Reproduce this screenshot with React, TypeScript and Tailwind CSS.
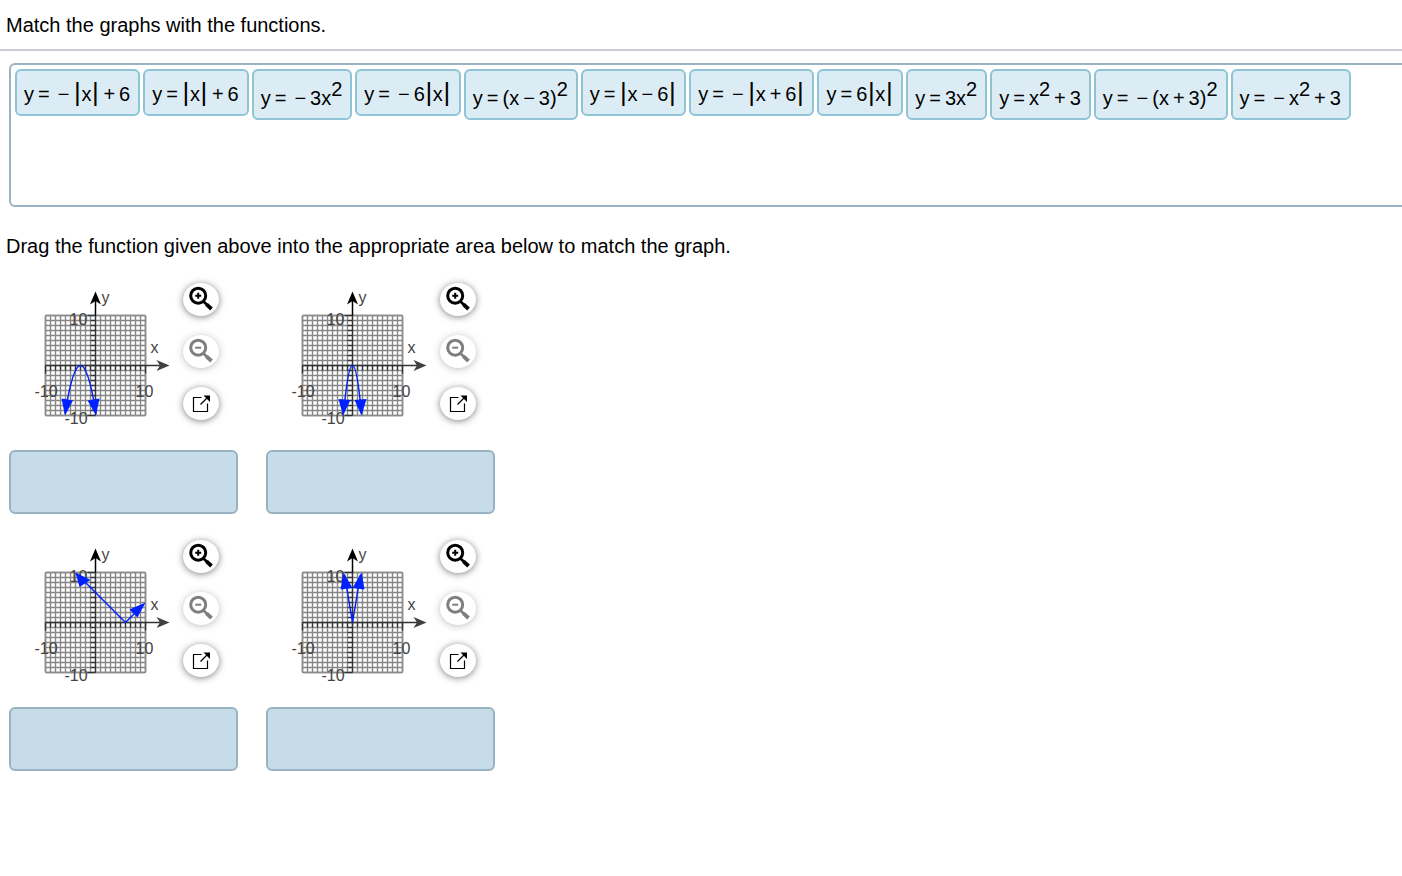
import { useState } from "react";
import type { DragEvent, ReactNode } from "react";
import clsx from "clsx";

// "|" is an absolute value bar, "^2" a raised exponent, "=", "+" and "−" are operators
const FUNCTIONS: string[][] = [
  ["y", "=", "−", "|", "x", "|", "+", "6"],
  ["y", "=", "|", "x", "|", "+", "6"],
  ["y", "=", "−", "3x", "^2"],
  ["y", "=", "−", "6", "|", "x", "|"],
  ["y", "=", "(x", "−", "3)", "^2"],
  ["y", "=", "|", "x", "−", "6", "|"],
  ["y", "=", "−", "|", "x", "+", "6", "|"],
  ["y", "=", "6", "|", "x", "|"],
  ["y", "=", "3x", "^2"],
  ["y", "=", "x", "^2", "+", "3"],
  ["y", "=", "−", "(x", "+", "3)", "^2"],
  ["y", "=", "−", "x", "^2", "+", "3"],
];

interface GraphData {
  name: string;
  curve: string;
  arrows: string[];
}

// Coordinates are relative to the origin, 5 units per grid square
const GRAPHS: GraphData[] = [
  {
    name: "Graph 1",
    curve: "M-30.5 48 Q-15 -48 0.5 48",
    arrows: ["-34,33 -22.5,35 -30.5,50", "-8,35 4,33 0.5,50"],
  },
  {
    name: "Graph 2",
    curve: "M-9 48 Q0 -48 9 48",
    arrows: ["-14,33.5 -2,34.5 -9.5,50", "2,34.5 14,33.5 9,50"],
  },
  {
    name: "Graph 3",
    curve: "M-19 -49 L30 0 L48 -18",
    arrows: ["-20,-50 -16,-35.5 -5,-42.5", "50,-20 34,-13 42,-5"],
  },
  {
    name: "Graph 4",
    curve: "M-8 -48 L0 0 L8 -48",
    arrows: ["-9,-50 -12,-33 0,-34.5", "9,-50 0,-34.5 12,-33"],
  },
];

const TICKS = Array.from({ length: 21 }, (_, i) => (i - 10) * 5);

const Formula = ({ tokens }: { tokens: string[] }) => (
  <>
    {tokens.map((token, i) => {
      if (token === "|") {
        return (
          <span key={i} className="w-2 text-center text-[26px] leading-6">
            |
          </span>
        );
      }
      if (token === "^2") {
        return (
          <sup key={i} className="-top-[9px] text-xl leading-6">
            2
          </sup>
        );
      }
      if (token === "=" || token === "+" || token === "−") {
        return (
          <span key={i} className="mx-1">
            {token}
          </span>
        );
      }
      return <span key={i}>{token}</span>;
    })}
  </>
);

const FunctionChip = ({ index }: { index: number }) => {
  const tokens = FUNCTIONS[index];
  return (
    <button
      type="button"
      draggable
      onDragStart={(e) => e.dataTransfer.setData("text/plain", String(index))}
      className={clsx(
        "flex cursor-move items-baseline rounded-md border-2 border-[#8fc3d6] bg-[#dcecf5] pl-[7px] pr-2 text-xl leading-6",
        tokens.includes("^2") ? "pt-[15px] pb-2" : "pt-[9px] pb-2"
      )}
    >
      <Formula tokens={tokens} />
    </button>
  );
};

const Graph = ({ graph }: { graph: GraphData }) => (
  <svg width="170" height="150" viewBox="-86.5 -83.5 170 150" role="img" aria-label={graph.name}>
    {/* Grid */}
    <g stroke="#868686" strokeWidth="1.4">
      {TICKS.map((t) => (
        <g key={t}>
          <line x1={t} y1={-50} x2={t} y2={50} />
          <line x1={-50} y1={t} x2={50} y2={t} />
        </g>
      ))}
    </g>
    <rect x="-50" y="-50" width="100" height="100" rx="1" fill="none" stroke="#8c8c8c" strokeWidth="1.6" />

    {/* Axes and tick marks */}
    <g stroke="#333333" strokeWidth="1.3">
      {TICKS.map((t) => (
        <g key={t}>
          <line x1={t} y1="0" x2={t} y2={Math.abs(t) === 50 ? 8 : 5} />
          <line x1={Math.abs(t) === 50 ? -8 : -5} y1={t} x2="0" y2={t} />
        </g>
      ))}
      <line x1="-50" y1="0" x2="66" y2="0" />
      <line x1="0" y1="-50" x2="0" y2="50" />
    </g>
    <line x1="0" y1="-50" x2="0" y2="-66" stroke="#000" strokeWidth="1.5" />
    <polygon points="0,-74 5.5,-61 0,-64.5 -5.5,-61" fill="#000" />
    <polygon points="74,0 61,5.5 64.5,0 61,-5.5" fill="#404040" />

    {/* Labels */}
    <g fill="#444444" fontSize="16">
      <text x="6" y="-63">y</text>
      <text x="55" y="-13">x</text>
      <text x="-26" y="-41">10</text>
      <text x="-31" y="58">-10</text>
      <text x="-61" y="31">-10</text>
      <text x="40" y="31">10</text>
    </g>

    {/* Function */}
    <path d={graph.curve} fill="none" stroke="#0021ff" strokeWidth="1.5" />
    {graph.arrows.map((points) => (
      <polygon key={points} points={points} fill="#0021ff" />
    ))}
  </svg>
);

interface ToolButtonProps {
  label: string;
  disabled?: boolean;
  children: ReactNode;
}

const ToolButton = ({ label, disabled, children }: ToolButtonProps) => (
  <button
    type="button"
    aria-label={label}
    disabled={disabled}
    className="rounded-[50%] bg-white shadow-[0_1px_7px_rgba(0,0,0,0.5)] disabled:opacity-50"
  >
    <svg width="36" height="33" viewBox="0 0 36 33" fill="none" stroke="#000">
      {children}
    </svg>
  </button>
);

const GraphTools = () => (
  <div className="flex flex-col gap-[19px] pt-px">
    <ToolButton label="Zoom in">
      <circle cx="15.2" cy="12.7" r="7.5" strokeWidth="3" />
      <path d="M12.2 12.7h6M15.2 9.7v6" strokeWidth="2" />
      <path d="M20.5 18.5l4 3.8" strokeWidth="2.6" />
      <path d="M23.5 21.3l5 4.7" strokeWidth="3.8" />
    </ToolButton>
    <ToolButton label="Zoom out" disabled>
      <circle cx="15.2" cy="12.7" r="7.5" strokeWidth="3" />
      <path d="M12.2 12.7h6" strokeWidth="2" />
      <path d="M20.5 18.5l4 3.8" strokeWidth="2.6" />
      <path d="M23.5 21.3l5 4.7" strokeWidth="3.8" />
    </ToolButton>
    <ToolButton label="Open in new window">
      <path d="M18.5 10.5h-8v14h14v-8" strokeWidth="1.2" />
      <path d="M17.5 17.5l7-7" strokeWidth="1.2" />
      <path d="M20.5 8.5H27V15z" fill="#000" stroke="none" />
    </ToolButton>
  </div>
);

export default function App() {
  const [answers, setAnswers] = useState<(number | null)[]>(GRAPHS.map(() => null));

  const handleDrop = (e: DragEvent, slot: number) => {
    e.preventDefault();
    const raw = e.dataTransfer.getData("text/plain");
    const index = Number(raw);
    if (raw === "" || !FUNCTIONS[index]) return;
    setAnswers((prev) =>
      prev.map((a, i) => {
        if (i === slot) return index;
        return a === index ? null : a;
      })
    );
  };

  return (
    <main className="min-h-screen overflow-x-hidden bg-white font-['Liberation_Sans',Arial,sans-serif] text-xl leading-6 text-black">
      <h1 className="px-1.5 pt-[13px] pb-3">Match the graphs with the functions.</h1>
      <hr className="border-t-2 border-[#c9cdda]" />

      {/* Function bank */}
      <section className="mt-3 ml-[9px] flex min-h-36 flex-wrap content-start items-start gap-[3px] rounded-l-md border-2 border-r-0 border-[#9ab3c2] p-1">
        {FUNCTIONS.map((_, i) => !answers.includes(i) && <FunctionChip key={i} index={i} />)}
      </section>

      <p className="px-1.5 pt-[27px]">
        Drag the function given above into the appropriate area below to match the graph.
      </p>

      {/* Graphs with drop areas */}
      <section className="mt-6 ml-[9px] grid w-fit grid-cols-2 gap-x-7 gap-y-[25px] pb-10">
        {GRAPHS.map((graph, i) => {
          const answer = answers[i];
          return (
            <div key={graph.name} className="w-[229px]">
              <div className="flex h-[168px] items-start gap-1">
                <Graph graph={graph} />
                <GraphTools />
              </div>
              <div
                onDragOver={(e) => e.preventDefault()}
                onDrop={(e) => handleDrop(e, i)}
                className="flex min-h-16 items-center justify-center rounded-md border-2 border-[#9ab3c2] bg-[#c6dde9]"
              >
                {answer !== null && <FunctionChip index={answer} />}
              </div>
            </div>
          );
        })}
      </section>
    </main>
  );
}
